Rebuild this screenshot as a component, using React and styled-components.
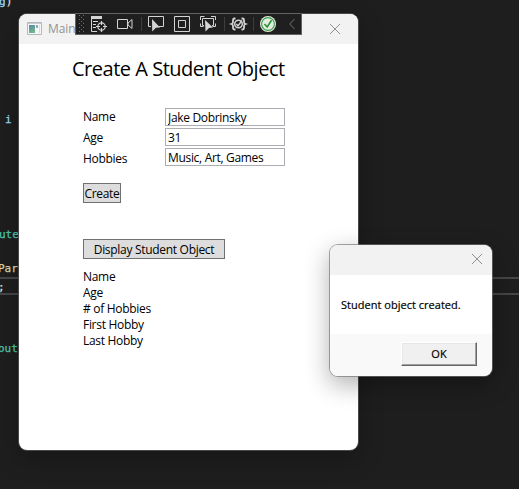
import React from "react";
import styled, { createGlobalStyle } from "styled-components";

const GlobalStyle = createGlobalStyle`
  * { box-sizing: border-box; }
  body { margin: 0; background: #1e1e1e; }
`;

const Desktop = styled.main`
  position: relative;
  width: 519px;
  height: 489px;
  overflow: hidden;
  background: #1e1e1e;
  color: #000;
  font-family: "Open Sans", "Noto Sans", sans-serif;
  font-size: 12px;
`;

const Editor = styled.div`
  display: flex;
  flex-direction: column;
  padding-top: 8px;
  font: 11px/16px "DejaVu Sans Mono", monospace;
`;

const CodeLine = styled.div`
  height: 16px;
  flex: none;
  white-space: pre;
  color: ${(p) => p.$color};
  margin-top: ${(p) => p.$gap}px;
  text-indent: ${(p) => p.$indent}px;
  -webkit-text-stroke: 0.25px currentColor;
`;

const Punctuation = styled.span`
  color: #dcdcdc;
`;

const CurrentLine = styled(CodeLine)`
  height: 18px;
  border: solid #464646;
  border-width: 2px 0;
  line-height: 17px;
`;

const Window = styled.section`
  position: absolute;
  left: 19px;
  top: 14px;
  width: 339px;
  height: 436px;
  overflow: hidden;
  border-radius: 8px;
  background: #fff;
`;

const WindowFrame = styled.div`
  position: absolute;
  left: 18px;
  top: 13px;
  width: 341px;
  height: 438px;
  border: 1px solid #484848;
  border-radius: 9px;
  box-shadow: 0 8px 24px rgba(0, 0, 0, 0.25);
`;

const TitleBar = styled.header`
  display: flex;
  align-items: center;
  justify-content: space-between;
  height: 30px;
  padding: ${(p) => p.$padding};
  background: #f2f2f2;
  color: #929292;
`;

const TitleLabel = styled.div`
  display: flex;
  align-items: center;
  gap: 6px;
  letter-spacing: -0.1px;
`;

const Content = styled.div`
  display: flex;
  flex-direction: column;
  align-items: flex-start;
  padding: 10px 0 0 64px;
`;

const Heading = styled.h1`
  margin: 0 0 0 -11px;
  height: 30px;
  font-size: 20px;
  font-weight: 400;
  line-height: 30px;
  letter-spacing: -0.48px;
  white-space: nowrap;
`;

const Form = styled.div`
  display: grid;
  grid-template-columns: 82px 120px;
  margin-top: 24px;
`;

const Labels = styled.div`
  display: flex;
  flex-direction: column;
  margin-top: -1px;
`;

const Label = styled.label`
  height: ${(p) => p.$height}px;
  line-height: ${(p) => p.$height}px;
  letter-spacing: -0.3px;
  white-space: nowrap;
`;

const Fields = styled.div`
  display: flex;
  flex-direction: column;
  gap: 2px;
`;

const Field = styled.input`
  width: 120px;
  height: 18px;
  padding: 0 0 0 2px;
  border: 1px solid #abadb3;
  border-radius: 0;
  background: #fff;
  color: #000;
  font: inherit;
  line-height: 16px;
  letter-spacing: -0.32px;
  outline: none;
`;

const FlatButton = styled.button`
  width: ${(p) => p.$width}px;
  height: 20px;
  margin-top: ${(p) => p.$top}px;
  padding: 1px 0 0 0;
  border: 1px solid #707070;
  border-radius: 0;
  background: #ddd;
  color: #000;
  font: inherit;
  line-height: 18px;
  letter-spacing: ${(p) => p.$spacing}px;
  white-space: nowrap;
`;

const Results = styled.div`
  display: flex;
  flex-direction: column;
  margin-top: 10px;
`;

const DebugToolbar = styled.nav`
  position: absolute;
  left: 75px;
  top: 13px;
  width: 227px;
  height: 22px;
  border: 1px solid #626262;
  background: #1f1f1f;
`;

const Dialog = styled.section`
  position: absolute;
  left: 329px;
  top: 244px;
  width: 164px;
  height: 133px;
  overflow: hidden;
  border: 1px solid rgba(115, 115, 115, 0.65);
  border-radius: 9px;
  background: #fff;
  background-clip: padding-box;
  box-shadow: 0 8px 25px rgba(0, 0, 0, 0.3);
`;

const Message = styled.p`
  height: 59px;
  margin: 0;
  padding-left: 11px;
  font-size: 11px;
  line-height: 60px;
  letter-spacing: 0.02px;
  white-space: nowrap;
  -webkit-text-stroke: 0.2px currentColor;
`;

const Actions = styled.footer`
  display: flex;
  justify-content: flex-end;
  height: 42px;
  padding: 8px 15px 0 0;
  background: #f9f9f9;
`;

const OkButton = styled.button`
  width: 76px;
  height: 24px;
  padding: 0;
  border: 1px solid;
  border-color: #fff #666 #666 #fff;
  box-shadow: inset -1px -1px #a0a0a0, inset 1px 1px #e6e6e6;
  background: #f0f0f0;
  color: #000;
  font: inherit;
  font-size: 11px;
  line-height: 20px;
  -webkit-text-stroke: 0.2px currentColor;
`;

const Drawing = styled.svg`
  display: block;
  flex: none;
`;

const CloseIcon = () => (
  <Drawing width="12" height="12" viewBox="0 0 12 12" stroke="#929292">
    <path d="M1 1 L11 11 M11 1 L1 11" />
  </Drawing>
);

const AppIcon = () => (
  <Drawing width="15" height="13" viewBox="0 0 15 13">
    <defs>
      <linearGradient id="pane" x2="0.4" y2="1">
        <stop stopColor="#5a86ac" />
        <stop offset="1" stopColor="#70b68a" />
      </linearGradient>
    </defs>
    <path d="M.5 .5h14v12H.5z" fill="#f7f7f7" stroke="#b4b8bc" />
    <path d="M1 1h13v1H1z" fill="#c8cdd2" />
    <path d="M2 3h6v8H2z" fill="url(#pane)" />
    <path d="M9 3h2v3H9z" fill="#92a9b8" />
    <path d="M12 3h1v8h-1z" fill="#d7dde2" />
  </Drawing>
);

const ToolbarIcons = () => (
  <Drawing width="225" height="20" viewBox="76 14 225 20" fill="none" stroke="#d4d4d4">
    <defs>
      <pattern id="grip" x="79" y="15" width="4" height="4" patternUnits="userSpaceOnUse">
        <path d="M0 0h1v1H0zM2 2h1v1H2z" fill="#707070" stroke="none" />
      </pattern>
    </defs>
    <path d="M79 15h5v18h-5z" fill="url(#grip)" stroke="none" />

    <path d="M91 16h11v3H91z" fill="#d4d4d4" stroke="none" />
    <path d="M91.5 19v12.5H97M93 21.5h5M93 24.5h3M93 27.5h3" />
    <circle cx="101.5" cy="26.5" r="3.7" strokeWidth="1.2" />
    <path d="M101.5 21v4M101.5 28v4M96 26.5h4M103 26.5h4" strokeWidth="1.2" />

    <path d="M117.5 19.5h10v9h-10zM128 23l4-3.5v9L128 25z" />
    <path d="M141.5 17v14M224.5 17v14M253.5 17v14" stroke="#3d3d3d" />

    <path d="M151 26.5h-2.5v-10h15v10H159" />
    <path d="M152 19l8 8.5-4 .3-3.8 3.7z" fill="#d4d4d4" stroke="none" />

    <path d="M174.5 16.5h15v15h-15zM178.5 20.5h7v7h-7z" />

    <path d="M200.5 20v-3.5h4M211 16.5h4.5V20M215.5 23.5v3h-3M200.5 23.5v3h3M204 25.5h-1.5v-7h11v7H212" />
    <path d="M205 20l8 7.5-4 .4-3.5 3.6z" fill="#d4d4d4" stroke="none" />

    <path d="M235.5 18.5h-1q-1.5 0-1.5 1.5v2q0 1.5-1.5 2 1.5.5 1.5 2v2q0 1.5 1.5 1.5h1M241.5 18.5h1q1.5 0 1.5 1.5v2q0 1.5 1.5 2-1.5.5-1.5 2v2q0 1.5-1.5 1.5h-1" strokeWidth="1.8" />
    <circle cx="238.5" cy="24" r="3.8" strokeWidth="1.5" />
    <path d="M236.3 24l1.7 1.8 4-5.3" strokeWidth="1.4" />

    <circle cx="268" cy="24" r="8" fill="#e4ece4" stroke="none" />
    <circle cx="268" cy="24" r="6.4" stroke="#379a3c" strokeWidth="1.1" />
    <path d="M264.5 24l2.7 3 4.3-6.7" stroke="#28932f" strokeWidth="1.6" />
    <path d="M294.5 19l-4.7 5 4.7 5" stroke="#707070" />
  </Drawing>
);

const resultLabels = ["Name", "Age", "# of Hobbies", "First Hobby", "Last Hobby"];

export default function App() {
  return (
    <>
      <GlobalStyle />
      <Desktop>
        <Editor>
          <CodeLine $color="#9cdcfe" $gap={-14} $indent={-1}>g<Punctuation>)</Punctuation></CodeLine>
          <CodeLine $color="#9cdcfe" $gap={102} $indent={5}>i</CodeLine>
          <CodeLine $color="#4ec9b0" $gap={99} $indent={-1}>ute</CodeLine>
          <CodeLine $color="#dcdcaa" $gap={18} $indent={-2}>Par</CodeLine>
          <CurrentLine $color="#dcdcdc" $gap={0} $indent={-2}>;</CurrentLine>
          <CodeLine $color="#4ec9b0" $gap={46} $indent={-2}>out</CodeLine>
        </Editor>

        <WindowFrame />
        <Window>
          <TitleBar $padding="0 17px 1px 8px">
            <TitleLabel><AppIcon />MainWindow</TitleLabel>
            <CloseIcon />
          </TitleBar>
          <Content>
            <Heading>Create A Student Object</Heading>
            <Form>
              <Labels>
                <Label $height={20}>Name</Label>
                <Label $height={21}>Age</Label>
                <Label $height={21}>Hobbies</Label>
              </Labels>
              <Fields>
                <Field defaultValue="Jake Dobrinsky" />
                <Field defaultValue="31" />
                <Field defaultValue="Music, Art, Games" />
              </Fields>
            </Form>
            <FlatButton $width={38} $top={14} $spacing={-0.3}>Create</FlatButton>
            <FlatButton $width={142} $top={36} $spacing={-0.3}>Display Student Object</FlatButton>
            <Results>
              {resultLabels.map((text) => <Label key={text} $height={16}>{text}</Label>)}
            </Results>
          </Content>
        </Window>
        <DebugToolbar><ToolbarIcons /></DebugToolbar>

        <Dialog>
          <TitleBar $padding="0 9px 2px 0"><span /><CloseIcon /></TitleBar>
          <Message>Student object created.</Message>
          <Actions><OkButton>OK</OkButton></Actions>
        </Dialog>
      </Desktop>
    </>
  );
}
